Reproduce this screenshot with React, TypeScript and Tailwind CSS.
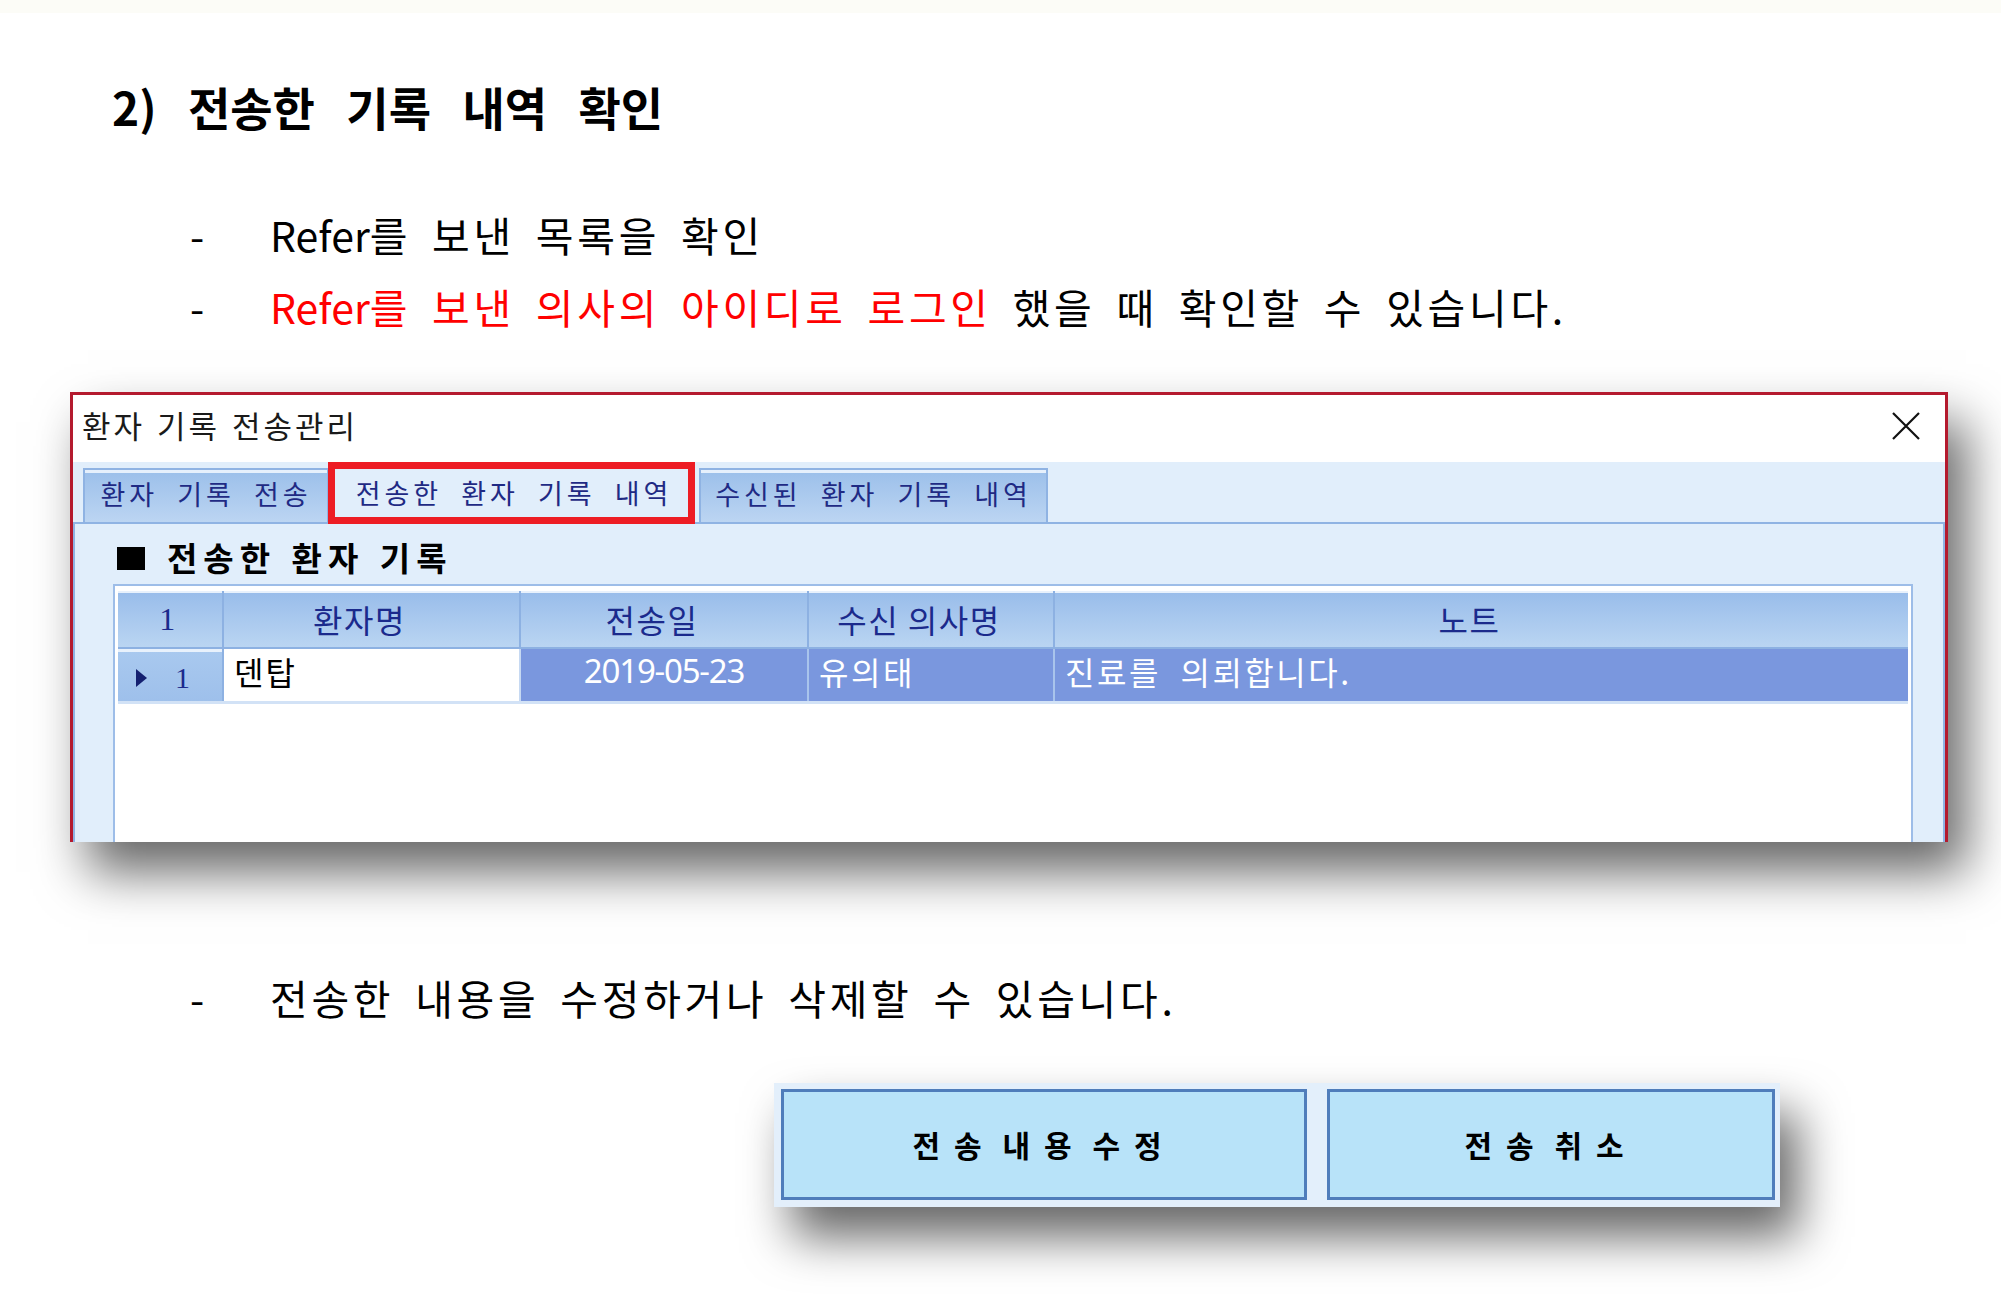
import type { ReactNode } from "react";

const cols = [
  { key: "name", title: "환자명", w: "w-[297px]" },
  { key: "date", title: "전송일", w: "w-[288px]" },
  { key: "doctor", title: "수신 의사명", w: "w-[246px]" },
  { key: "note", title: "노트", w: "flex-1" },
];

function Bullet({ children }: { children: ReactNode }) {
  return (
    <li className="flex h-[72px] items-center pl-[190px] text-[41px] leading-[72px] tracking-[3.7px] [word-spacing:8px]">
      <span className="w-[80px] shrink-0">-</span>
      <span>{children}</span>
    </li>
  );
}

// "Refer" sits tighter than the hangul around it
function Refer() {
  return <span className="tracking-[0px]">Refer</span>;
}

function CloseIcon() {
  return (
    <svg width="28" height="28" viewBox="0 0 28 28" fill="none">
      <path d="M1 1L27 27M27 1L1 27" stroke="#111" strokeWidth="2.2" />
    </svg>
  );
}

function Tab({
  label,
  width,
  active,
}: {
  label: string;
  width: string;
  active?: boolean;
}) {
  return (
    <div
      className={`${width} relative flex h-[54px] items-center justify-center pb-[3px] text-[27px] tracking-[4px] text-[#1f2a84] [word-spacing:9px] ${
        active
          ? "bg-[#e1eefb]"
          : "border-x-2 border-t-2 border-[#8fb3e3] bg-gradient-to-b from-[#9bbfea] to-[#bcd5f2] shadow-[inset_0_3px_0_#e6f0fc]"
      }`}
    >
      {label}
      {active && (
        <span className="absolute bottom-[-2px] left-[-1px] right-[4px] top-[-6px] border-[7px] border-[#ed1c24]" />
      )}
    </div>
  );
}

function RecordGrid() {
  return (
    <div className="ml-[38px] mt-[6px] flex-1 border-x-2 border-t-2 border-[#9dbde8] bg-white px-[3px] pt-[5px]">
      {/* header row */}
      <div className="flex h-[58px] border-b-2 border-[#8db1e2] text-[32px] tracking-[1.5px] text-[#1b2a8c]">
        <div className="flex w-[106px] items-center justify-center border-r-2 border-[#8db1e2] bg-gradient-to-b from-[#98bcea] to-[#bad5f2] pr-[4px] font-['Liberation_Serif',serif] shadow-[inset_0_2px_0_#e8f1fc]">
          1
        </div>
        {cols.map((c, i) => (
          <div
            key={c.key}
            className={`${c.w} flex items-center justify-center bg-gradient-to-b from-[#98bcea] to-[#bad5f2] pr-[24px] shadow-[inset_0_2px_0_#e8f1fc] ${
              i < cols.length - 1 ? "border-r-2 border-[#8db1e2]" : ""
            }`}
          >
            {c.title}
          </div>
        ))}
      </div>

      {/* selected data row */}
      <div className="flex h-[55px] border-b-[3px] border-[#d2e2f6] text-[32px] leading-[44px] tracking-[2px]">
        <div className="flex w-[106px] items-center gap-[28px] border-r-2 border-[#8db1e2] bg-gradient-to-b from-[#a9c9ef] to-[#9ec0eb] pl-[18px] pt-[6px] text-[#1b2a8c] shadow-[inset_0_3px_0_#e8f1fc]">
          <svg width="11" height="18" viewBox="0 0 11 18">
            <path d="M0 0L11 9L0 18Z" fill="#142070" />
          </svg>
          <span className="font-['Liberation_Serif',serif] text-[30px]">1</span>
        </div>
        <div className="flex w-[297px] items-start border-r-2 border-[#c6d9f2] bg-white pl-[10px] text-black">
          덴탑
        </div>
        <div className="flex w-[288px] items-start justify-center border-r-2 border-[#a9c4ec] bg-[#7a97de] font-['Noto_Sans',sans-serif] text-[33px] tracking-[-1.2px] text-white">
          2019-05-23
        </div>
        <div className="flex w-[246px] items-start border-r-2 border-[#a9c4ec] bg-[#7a97de] pl-[10px] tracking-[2.5px] text-white">
          유의태
        </div>
        <div className="flex flex-1 items-start bg-[#7a97de] pl-[10px] tracking-[2.5px] text-white [word-spacing:10px]">
          진료를 의뢰합니다.
        </div>
      </div>
    </div>
  );
}

function RecordWindow() {
  return (
    <div className="ml-[70px] mt-[50px] flex h-[450px] w-[1878px] flex-col border-x-[3px] border-t-[3px] border-[#b41a2e] bg-white shadow-[18px_30px_48px_rgba(0,0,0,0.6)]">
      {/* title bar */}
      <div className="flex h-[67px] shrink-0 items-center justify-between pb-[6px] pl-[9px] pr-[25px]">
        <span className="text-[31px] tracking-[3px] text-[#1a1a1a] [word-spacing:2px]">
          환자 기록 전송관리
        </span>
        <CloseIcon />
      </div>

      <div className="flex min-h-0 flex-1 flex-col bg-[#e1eefb] pt-[6px]">
        <div className="flex shrink-0 pl-[10px]">
          <Tab label="환자 기록 전송" width="w-[246px]" />
          <Tab label="전송한 환자 기록 내역" width="w-[370px]" active />
          <Tab label="수신된 환자 기록 내역" width="w-[349px]" />
        </div>

        {/* tab page */}
        <div className="flex min-h-0 flex-1 flex-col border-x-2 border-t-2 border-[#8fb3e3]">
          <div className="ml-[42px] mt-[14px] flex h-[40px] shrink-0 items-center gap-[22px]">
            <span className="h-[23px] w-[28px] bg-black" />
            <span className="text-[33px] font-bold tracking-[6px] [word-spacing:2px]">
              전송한 환자 기록
            </span>
          </div>
          <div className="mr-[30px] flex min-h-0 flex-1">
            <RecordGrid />
          </div>
        </div>
      </div>
    </div>
  );
}

function ActionButtons() {
  const btn =
    "flex h-[111px] items-center justify-center border-[3px] border-[#4f7dbb] bg-[#b8e3f9] text-[30px] font-bold tracking-[14px] text-black [word-spacing:-14px]";
  return (
    <div className="ml-[774px] mt-[50px] flex h-[124px] w-[1006px] gap-[20px] bg-[#e3effb] pl-[7px] pt-[6px] shadow-[18px_30px_48px_rgba(0,0,0,0.6)]">
      <button className={`${btn} w-[526px]`}>전송 내용 수정</button>
      <button className={`${btn} w-[448px]`}>전송 취소</button>
    </div>
  );
}

export default function App() {
  return (
    <div className="h-[1301px] w-[2001px] overflow-hidden bg-white font-['Noto_Sans_CJK_KR','Noto_Sans',sans-serif] text-black">
      <div className="h-[13px] bg-[#fcfcf7]" />
      <h2 className="ml-[112px] mt-[65px] h-[56px] text-[46px] font-bold leading-[56px] [word-spacing:21px]">
        2) 전송한 기록 내역 확인
      </h2>
      <ul className="mt-[64px]">
        <Bullet>
          <Refer />를 보낸 목록을 확인
        </Bullet>
        <Bullet>
          <span className="text-[#ff0000]">
            <Refer />를 보낸 의사의 아이디로 로그인
          </span>{" "}
          했을 때 확인할 수 있습니다.
        </Bullet>
      </ul>

      <RecordWindow />

      <ul className="mt-[119px]">
        <Bullet>전송한 내용을 수정하거나 삭제할 수 있습니다.</Bullet>
      </ul>

      <ActionButtons />
    </div>
  );
}
